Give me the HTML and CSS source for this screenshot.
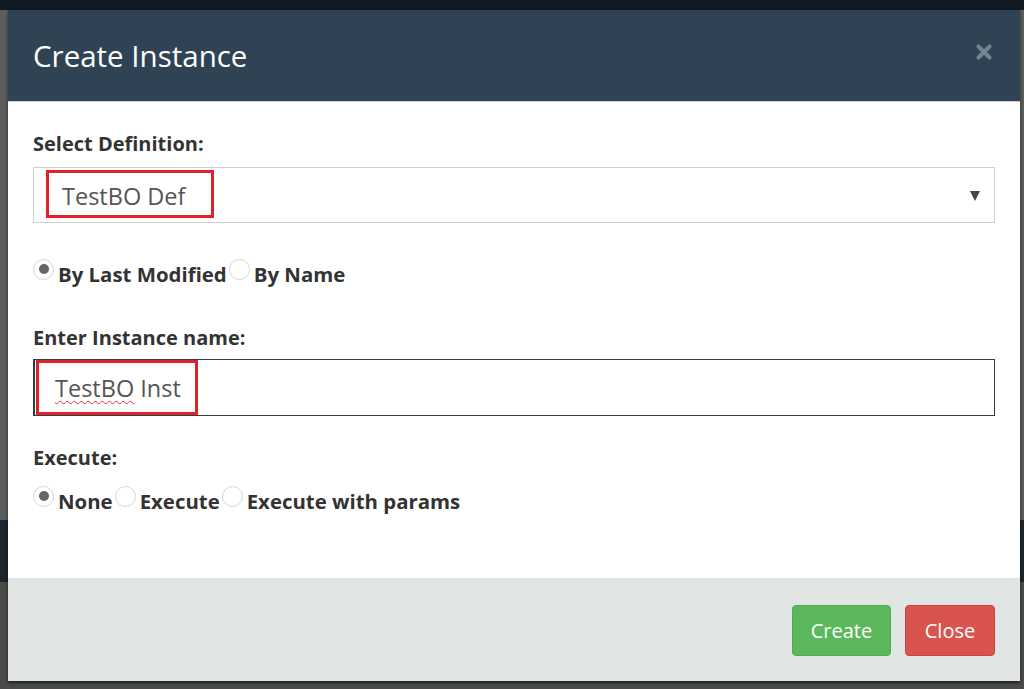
FILE: index.html
```html
<!DOCTYPE html>
<html>
<head>
<meta charset="utf-8">
<link rel="stylesheet" href="styles.css">
</head>
<body>
<div class="modal">
  <div class="modal-header">
    <h1 class="modal-title">Create Instance</h1>
    <svg class="close-x" width="16" height="16" viewBox="0 0 16 16"><path d="M2.5 2.5 L13.5 13.5 M13.5 2.5 L2.5 13.5" stroke="#76848f" stroke-width="4" stroke-linecap="round" fill="none"/></svg>
  </div>
  <div class="modal-body">
    <div class="label">Select Definition:</div>
    <div class="select">
      <span class="mark mark-def"><span>TestBO Def</span></span>
      <span class="caret"></span>
    </div>
    <div class="radios radios-sort">
      <span class="radio checked"></span><span class="rlabel">By Last Modified</span>
      <span class="radio"></span><span class="rlabel">By Name</span>
    </div>
    <div class="label label-name">Enter Instance name:</div>
    <div class="input">
      <span class="mark mark-inst"><span><span class="spell">TestBO</span> Inst</span></span>
    </div>
    <div class="label label-exec">Execute:</div>
    <div class="radios radios-exec">
      <span class="radio checked"></span><span class="rlabel">None</span>
      <span class="radio"></span><span class="rlabel">Execute</span>
      <span class="radio"></span><span class="rlabel">Execute with params</span>
    </div>
  </div>
  <div class="modal-footer">
    <button class="btn btn-create">Create</button>
    <button class="btn btn-close">Close</button>
  </div>
</div>
</body>
</html>
```

FILE: styles.css
```css
html, body {
  margin: 0;
  padding: 0;
}
body {
  width: 1024px;
  height: 689px;
  overflow: hidden;
  font-family: "Open Sans", "DejaVu Sans", sans-serif;
  background: linear-gradient(to bottom, #121a21 0, #121a21 10px, #5c5d5d 10px, #5c5d5d 520px, #1c252d 520px, #1c252d 582px, #4a4a4a 582px);
  padding-top: 10px;
  box-sizing: border-box;
}
.modal {
  margin-left: 8px;
  width: 1012px;
  background: #fff;
  box-shadow: 0 2px 3px rgba(0,0,0,0.6);
}
.modal-header {
  height: 92px;
  background: #2f4354;
  display: flex;
  align-items: center;
  justify-content: space-between;
  padding: 0 28px 0 25px;
  border-bottom: 1px solid #c9d1d6;
  box-sizing: border-box;
}
.modal-title {
  margin: 0;
  color: #fff;
  font-weight: 400;
  font-size: 29.5px;
  line-height: 36px;
}
.close-x {
  margin-top: -8px;
}
.modal-body {
  padding: 30px 25px 0 25px;
  height: 476px;
  box-sizing: border-box;
}
.label {
  font-weight: 700;
  font-size: 20px;
  line-height: 24px;
  color: #333;
}
.select {
  margin-top: 11px;
  height: 56px;
  border: 1px solid #d0d0d0;
  box-sizing: border-box;
  display: flex;
  align-items: flex-start;
  justify-content: space-between;
  padding: 2px 14px 0 12px;
}
.mark {
  display: inline-flex;
  align-items: center;
  border: 3px solid #e02128;
  box-sizing: border-box;
  color: #555;
  font-size: 23.5px;
}
.mark-def {
  width: 168px;
  height: 48px;
  padding-left: 13px;
  padding-top: 3px;
}
.caret {
  margin-top: 21px;
  width: 0;
  height: 0;
  border-left: 5px solid transparent;
  border-right: 5px solid transparent;
  border-top: 10px solid #444;
}
.radios {
  display: flex;
  align-items: flex-start;
  color: #333;
  font-weight: 700;
  font-size: 20.4px;
}
.radios-sort {
  margin-top: 36px;
}
.radio {
  width: 21px;
  height: 21px;
  border: 1px solid #d6d6d6;
  border-radius: 50%;
  box-sizing: border-box;
  position: relative;
  flex: none;
  margin-right: 4px;
  background: #fff;
}
.radio.checked::after {
  content: "";
  position: absolute;
  left: 5px;
  top: 4px;
  width: 10px;
  height: 10px;
  border-radius: 50%;
  background: #666;
}
.rlabel {
  line-height: 24px;
  margin-top: 3px;
  margin-right: 2px;
}
.label-name {
  margin-top: 40px;
}
.input {
  margin-top: 9px;
  height: 57px;
  border: 1px solid #2c3f50;
  border-left: 2px solid #2c3f50;
  box-sizing: border-box;
  display: flex;
  align-items: flex-start;
  padding-left: 1px;
}
.mark-inst {
  width: 162px;
  height: 55px;
  padding-left: 16px;
  padding-top: 1px;
}
.spell {
  text-decoration: underline wavy #e0303a;
  text-decoration-thickness: 1px;
  text-underline-offset: 3px;
}
.label-exec {
  margin-top: 30px;
}
.radios-exec {
  margin-top: 16px;
}
.modal-footer {
  height: 103px;
  background: #e1e6e5;
  display: flex;
  justify-content: flex-end;
  align-items: flex-start;
  padding: 27px 25px 0 0;
  box-sizing: border-box;
  gap: 14px;
}
.btn {
  height: 51px;
  border: 1px solid transparent;
  border-radius: 4px;
  color: #fff;
  font-family: "Open Sans", "DejaVu Sans", sans-serif;
  font-size: 20px;
  padding: 0;
}
.btn-create {
  width: 99px;
  background: #5cb85c;
  border-color: #4cae4c;
}
.btn-close {
  width: 90px;
  background: #d9534f;
  border-color: #d43f3a;
}
```
